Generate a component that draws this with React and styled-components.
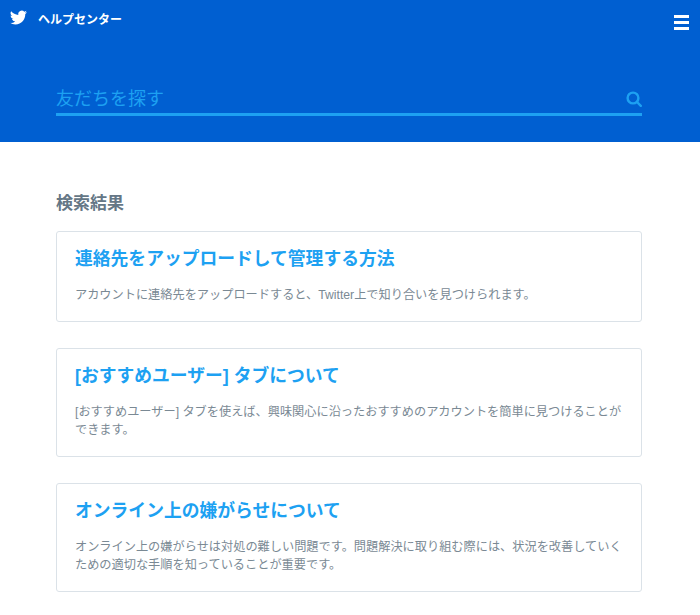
import React from "react";
import styled, { createGlobalStyle } from "styled-components";

const Global = createGlobalStyle`
  html, body { margin: 0; padding: 0; background: #fff; }
  body { font-family: "Liberation Sans", "Noto Sans CJK JP", sans-serif; overflow: hidden; }
`;
const Hero = styled.header`
  background: #005fd1;
  height: 142px;
  box-sizing: border-box;
  padding: 10px 10px 0 10px;
`;
const TopBar = styled.div`
  display: flex;
  align-items: flex-start;
  height: 44px;
`;
const Brand = styled.div`
  display: flex;
  align-items: flex-start;
  gap: 11px;
  flex: 1;
`;
const BrandName = styled.span`
  color: #fff;
  font-size: 12px;
  font-weight: 700;
  line-height: 20px;
`;
const Menu = styled.button`
  all: unset;
  display: flex;
  flex-direction: column;
  gap: 3px;
  width: 15px;
  margin: 5px 1px 0 0;
`;
const MenuLine = styled.span`
  height: 3px;
  background: #fff;
`;
const SearchBar = styled.div`
  display: flex;
  align-items: center;
  justify-content: space-between;
  margin: 0 48px 0 46px;
  padding-top: 31px;
  box-sizing: border-box;
  height: 62px;
  border-bottom: 3px solid #1da1f2;
`;
const SearchText = styled.span`
  color: #1da1f2;
  font-size: 18px;
  line-height: 28px;
`;
const Main = styled.main`
  padding: 51px 58px 0 56px;
`;
const Heading = styled.h2`
  margin: 0 0 16px;
  font-size: 17px;
  line-height: 22px;
  font-weight: 700;
  color: #657786;
`;
const List = styled.div`
  display: flex;
  flex-direction: column;
  gap: 26px;
`;
const Card = styled.article`
  border: 1px solid #dbe2e8;
  border-radius: 3px;
  box-sizing: border-box;
  padding: 14px 17px 17px 18px;
`;
const CardTitle = styled.h3`
  margin: 0 0 14px;
  font-size: 17.8px;
  line-height: 26px;
  font-weight: 700;
  color: #1da1f2;
`;
const CardText = styled.p`
  margin: 0;
  font-size: 12.2px;
  line-height: 18px;
  color: #7a8994;
`;

const Bird = () => (
  <svg width="17" height="15" viewBox="0 0 24 20" style={{ flexShrink: 0 }} aria-hidden="true">
    <path fill="#fff" d="M23.95 2.57a9.83 9.83 0 0 1-2.83.77A4.93 4.93 0 0 0 23.29.63a9.86 9.86 0 0 1-3.13 1.19 4.92 4.92 0 0 0-8.39 4.49A13.98 13.98 0 0 1 1.64 1.16a4.92 4.92 0 0 0 1.52 6.57 4.9 4.9 0 0 1-2.23-.62v.06a4.93 4.93 0 0 0 3.95 4.83 4.93 4.93 0 0 1-2.22.08 4.93 4.93 0 0 0 4.6 3.42A9.87 9.87 0 0 1 0 17.54a13.94 13.94 0 0 0 7.55 2.21c9.05 0 14-7.5 14-14 0-.21 0-.42-.02-.63a10 10 0 0 0 2.42-2.55z" />
  </svg>
);
const Lens = () => (
  <svg width="16" height="16" viewBox="0 0 16 16" aria-hidden="true">
    <circle cx="7" cy="7" r="5.4" fill="none" stroke="#1da1f2" strokeWidth="2.4" />
    <path d="M11 11l3.8 3.8" stroke="#1da1f2" strokeWidth="2.4" strokeLinecap="round" />
  </svg>
);

const results = [
  { title: "連絡先をアップロードして管理する方法", text: "アカウントに連絡先をアップロードすると、Twitter上で知り合いを見つけられます。" },
  { title: "[おすすめユーザー] タブについて", text: "[おすすめユーザー] タブを使えば、興味関心に沿ったおすすめのアカウントを簡単に見つけることができます。" },
  { title: "オンライン上の嫌がらせについて", text: "オンライン上の嫌がらせは対処の難しい問題です。問題解決に取り組む際には、状況を改善していくための適切な手順を知っていることが重要です。" },
];

export default function App() {
  return (
    <>
      <Global />
      <Hero>
        <TopBar>
          <Brand>
            <Bird />
            <BrandName>ヘルプセンター</BrandName>
          </Brand>
          <Menu aria-label="menu">
            <MenuLine /><MenuLine /><MenuLine />
          </Menu>
        </TopBar>
        <SearchBar>
          <SearchText>友だちを探す</SearchText>
          <Lens />
        </SearchBar>
      </Hero>
      <Main>
        <Heading>検索結果</Heading>
        <List>
          {results.map((r) => (
            <Card key={r.title}>
              <CardTitle>{r.title}</CardTitle>
              <CardText>{r.text}</CardText>
            </Card>
          ))}
        </List>
      </Main>
    </>
  );
}
